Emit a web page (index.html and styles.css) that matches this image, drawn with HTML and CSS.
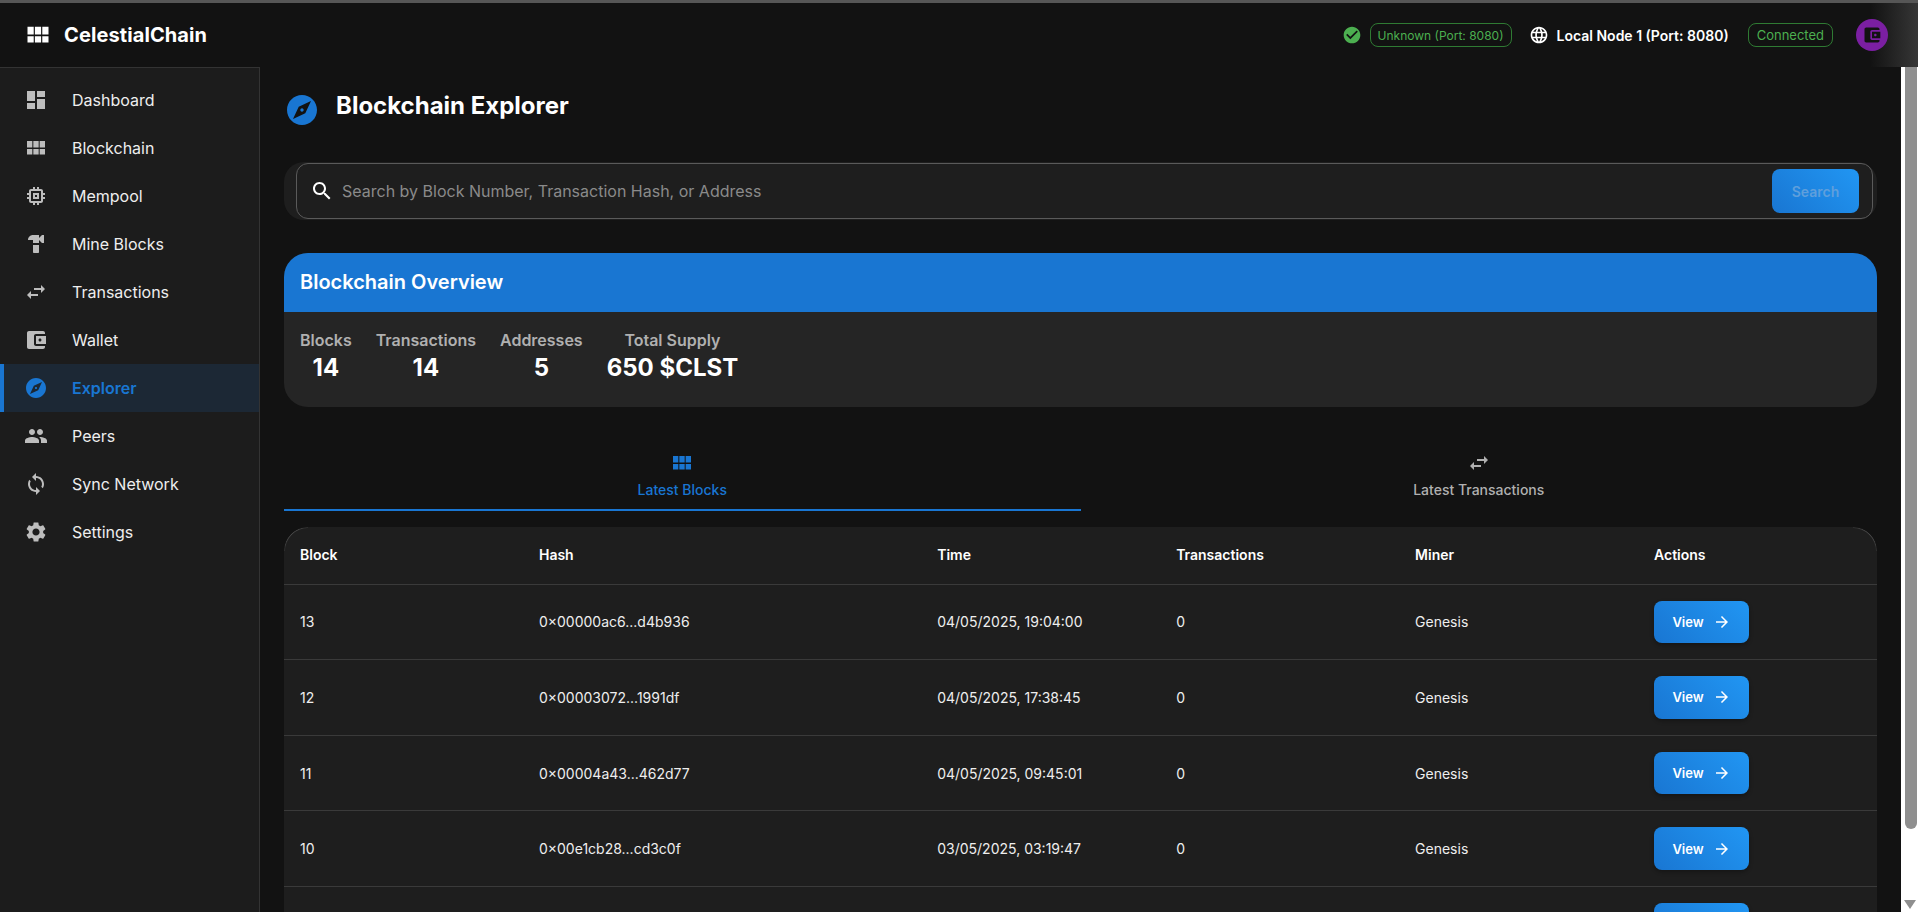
FILE: index.html
```html
<!DOCTYPE html>
<html lang="en">
    <head>
        <meta charset="utf-8">
        <title>CelestialChain Explorer</title>
        <link rel="stylesheet" href="styles.css">
    </head>
    <body>
        <svg class="defs" width="0" height="0">
            <symbol id="i-module" viewBox="0 0 24 24"><path d="M14.67 5v6.5H9.33V5h5.34zm1 6.5H21V5h-5.33v6.5zm-1 7V13H9.33v5.5h5.34zm1-5.5v5.5H21V13h-5.33zm-7.34 5.5V13H3v5.5h5.33zm0-7V5H3v6.5h5.33z"/></symbol>
            <symbol id="i-swap" viewBox="0 0 24 24"><path d="M6.99 11L3 15l3.99 4v-3H14v-2H6.99v-3zM21 9l-3.99-4v3H10v2h7.01v3L21 9z"/></symbol>
            <symbol id="i-wallet" viewBox="0 0 24 24"><path d="M21 18v1c0 1.1-.9 2-2 2H5c-1.11 0-2-.9-2-2V5c0-1.1.89-2 2-2h14c1.1 0 2 .9 2 2v1h-9c-1.11 0-2 .9-2 2v8c0 1.1.89 2 2 2h9zm-9-2h10V8H12v8zm4-2.5c-.83 0-1.5-.67-1.5-1.5s.67-1.5 1.5-1.5 1.5.67 1.5 1.5-.67 1.5-1.5 1.5z"/></symbol>
            <symbol id="i-explore" viewBox="0 0 24 24"><path d="M12 10.9c-.61 0-1.1.49-1.1 1.1s.49 1.1 1.1 1.1c.61 0 1.1-.49 1.1-1.1s-.49-1.1-1.1-1.1zM12 2C6.48 2 2 6.48 2 12s4.48 10 10 10 10-4.48 10-10S17.52 2 12 2zm2.19 12.19L6 18l3.81-8.19L18 6l-3.81 8.19z"/></symbol>
            <symbol id="i-arrow" viewBox="0 0 24 24"><path d="M12 4l-1.41 1.41L16.17 11H4v2h12.17l-5.58 5.59L12 20l8-8z"/></symbol>
        </svg>

        <div class="strip"></div>

        <header class="appbar">
            <div class="brand">
                <svg class="brand-icon"><use href="#i-module"/></svg>
                <span class="brand-name">CelestialChain</span>
            </div>
            <div class="status">
                <svg class="check" viewBox="0 0 24 24"><path d="M12 2C6.48 2 2 6.48 2 12s4.48 10 10 10 10-4.48 10-10S17.52 2 12 2zm-2 15l-5-5 1.41-1.41L10 14.17l7.59-7.59L19 8l-9 9z"/></svg>
                <span class="chip">Unknown (Port: 8080)</span>
                <svg class="globe" viewBox="0 0 24 24"><path d="M11.99 2C6.47 2 2 6.48 2 12s4.47 10 9.99 10C17.52 22 22 17.52 22 12S17.52 2 11.99 2zm6.93 6h-2.95c-.32-1.25-.78-2.45-1.38-3.56 1.84.63 3.37 1.91 4.33 3.56zM12 4.04c.83 1.2 1.48 2.53 1.91 3.96h-3.82c.43-1.43 1.08-2.76 1.91-3.96zM4.26 14C4.1 13.36 4 12.69 4 12s.1-1.36.26-2h3.38c-.08.66-.14 1.32-.14 2 0 .68.06 1.34.14 2H4.26zm.82 2h2.95c.32 1.25.78 2.45 1.38 3.56-1.84-.63-3.37-1.9-4.33-3.56zm2.95-8H5.08c.96-1.66 2.49-2.93 4.33-3.56C8.81 5.55 8.35 6.75 8.03 8zM12 19.96c-.83-1.2-1.48-2.53-1.91-3.96h3.82c-.43 1.43-1.08 2.76-1.91 3.96zM14.34 14H9.66c-.09-.66-.16-1.32-.16-2 0-.68.07-1.35.16-2h4.68c.09.65.16 1.32.16 2 0 .68-.07 1.34-.16 2zm.25 5.56c.6-1.11 1.06-2.31 1.38-3.56h2.95c-.96 1.65-2.49 2.93-4.33 3.56zM16.36 14c.08-.66.14-1.32.14-2 0-.68-.06-1.34-.14-2h3.38c.16.64.26 1.31.26 2s-.1 1.36-.26 2h-3.38z"/></svg>
                <span class="node-name">Local Node 1 (Port: 8080)</span>
                <span class="chip chip-last">Connected</span>
                <span class="avatar"><svg><use href="#i-wallet"/></svg></span>
            </div>
        </header>

        <div class="layout">
            <nav class="sidebar">
                <a class="nav-item"><svg viewBox="0 0 24 24"><path d="M3 13h8V3H3v10zm0 8h8v-6H3v6zm10 0h8V11h-8v10zm0-18v6h8V3h-8z"/></svg>Dashboard</a>
                <a class="nav-item"><svg><use href="#i-module"/></svg>Blockchain</a>
                <a class="nav-item"><svg viewBox="0 0 24 24"><path d="M15 9H9v6h6V9zm-2 4h-2v-2h2v2zm8-2V9h-2V7c0-1.1-.9-2-2-2h-2V3h-2v2h-2V3H9v2H7c-1.1 0-2 .9-2 2v2H3v2h2v2H3v2h2v2c0 1.1.9 2 2 2h2v2h2v-2h2v2h2v-2h2c1.1 0 2-.9 2-2v-2h2v-2h-2v-2h2zm-4 6H7V7h10v10z"/></svg>Mempool</a>
                <a class="nav-item"><svg viewBox="0 0 24 24"><path d="M18 3l-3 3V3H9C6.24 3 4 5.24 4 8h5v3h6V8l3 3h2V3h-2z"/><path d="M9 13v7c0 .55.45 1 1 1h4c.55 0 1-.45 1-1v-7H9z"/></svg>Mine Blocks</a>
                <a class="nav-item"><svg><use href="#i-swap"/></svg>Transactions</a>
                <a class="nav-item"><svg><use href="#i-wallet"/></svg>Wallet</a>
                <a class="nav-item active"><svg><use href="#i-explore"/></svg>Explorer</a>
                <a class="nav-item"><svg viewBox="0 0 24 24"><path d="M16 11c1.66 0 2.99-1.34 2.99-3S17.66 5 16 5c-1.66 0-3 1.34-3 3s1.34 3 3 3zm-8 0c1.66 0 2.99-1.34 2.99-3S9.66 5 8 5C6.34 5 5 6.34 5 8s1.34 3 3 3zm0 2c-2.33 0-7 1.17-7 3.5V19h14v-2.5c0-2.33-4.67-3.5-7-3.5zm8 0c-.29 0-.62.02-.97.05 1.16.84 1.97 1.97 1.97 3.45V19h6v-2.5c0-2.33-4.67-3.5-7-3.5z"/></svg>Peers</a>
                <a class="nav-item"><svg viewBox="0 0 24 24"><path d="M12 4V1L8 5l4 4V6c3.31 0 6 2.69 6 6 0 1.01-.25 1.97-.7 2.8l1.46 1.46C19.54 15.03 20 13.57 20 12c0-4.42-3.58-8-8-8zm0 14c-3.31 0-6-2.69-6-6 0-1.01.25-1.97.7-2.8L5.24 7.74C4.46 8.97 4 10.43 4 12c0 4.42 3.58 8 8 8v3l4-4-4-4v3z"/></svg>Sync Network</a>
                <a class="nav-item"><svg viewBox="0 0 24 24"><path d="M19.14 12.94c.04-.3.06-.61.06-.94 0-.32-.02-.64-.07-.94l2.03-1.58c.18-.14.23-.41.12-.61l-1.92-3.32c-.12-.22-.37-.29-.59-.22l-2.39.96c-.5-.38-1.03-.7-1.62-.94l-.36-2.54c-.04-.24-.24-.41-.48-.41h-3.84c-.24 0-.43.17-.47.41l-.36 2.54c-.59.24-1.13.57-1.62.94l-2.39-.96c-.22-.08-.47 0-.59.22L2.74 8.87c-.12.21-.08.47.12.61l2.03 1.58c-.05.3-.09.63-.09.94s.02.64.07.94l-2.03 1.58c-.18.14-.23.41-.12.61l1.92 3.32c.12.22.37.29.59.22l2.39-.96c.5.38 1.03.7 1.62.94l.36 2.54c.05.24.24.41.48.41h3.84c.24 0 .44-.17.47-.41l.36-2.54c.59-.24 1.13-.56 1.62-.94l2.39.96c.22.08.47 0 .59-.22l1.92-3.32c.12-.22.07-.47-.12-.61l-2.01-1.58zM12 15.6c-1.98 0-3.6-1.62-3.6-3.6s1.62-3.6 3.6-3.6 3.6 1.62 3.6 3.6-1.62 3.6-3.6 3.6z"/></svg>Settings</a>
            </nav>

            <main class="content">
                <div class="page-title">
                    <svg><use href="#i-explore"/></svg>
                    <h1>Blockchain Explorer</h1>
                </div>

                <div class="search-card">
                    <div class="search-field">
                        <svg viewBox="0 0 24 24"><path d="M15.5 14h-.79l-.28-.27C15.41 12.59 16 11.11 16 9.5 16 5.91 13.09 3 9.5 3S3 5.91 3 9.5 5.91 16 9.5 16c1.61 0 3.09-.59 4.23-1.57l.27.28v.79l5 4.99L20.49 19l-4.99-5zm-6 0C7.01 14 5 11.99 5 9.5S7.01 5 9.5 5 14 7.01 14 9.5 11.99 14 9.5 14z"/></svg>
                        <input class="search-input" placeholder="Search by Block Number, Transaction Hash, or Address">
                        <button class="search-btn">Search</button>
                    </div>
                </div>

                <section class="overview">
                    <h2>Blockchain Overview</h2>
                    <div class="stats">
                        <div class="stat"><span>Blocks</span><strong>14</strong></div>
                        <div class="stat"><span>Transactions</span><strong>14</strong></div>
                        <div class="stat"><span>Addresses</span><strong>5</strong></div>
                        <div class="stat"><span>Total Supply</span><strong>650 $CLST</strong></div>
                    </div>
                </section>

                <div class="tabs">
                    <div class="tab active"><svg><use href="#i-module"/></svg>Latest Blocks</div>
                    <div class="tab"><svg><use href="#i-swap"/></svg>Latest Transactions</div>
                </div>

                <div class="table-card">
                    <table>
                        <thead>
                            <tr>
                                <th class="col-s">Block</th>
                                <th class="col-l">Hash</th>
                                <th class="col-s">Time</th>
                                <th class="col-s">Transactions</th>
                                <th class="col-s">Miner</th>
                                <th class="col-s">Actions</th>
                            </tr>
                        </thead>
                        <tbody>
                            <tr>
                                <td>13</td><td>0×00000ac6...d4b936</td><td>04/05/2025, 19:04:00</td><td>0</td><td>Genesis</td>
                                <td><button class="view-btn">View<svg><use href="#i-arrow"/></svg></button></td>
                            </tr>
                            <tr>
                                <td>12</td><td>0×00003072...1991df</td><td>04/05/2025, 17:38:45</td><td>0</td><td>Genesis</td>
                                <td><button class="view-btn">View<svg><use href="#i-arrow"/></svg></button></td>
                            </tr>
                            <tr>
                                <td>11</td><td>0×00004a43...462d77</td><td>04/05/2025, 09:45:01</td><td>0</td><td>Genesis</td>
                                <td><button class="view-btn">View<svg><use href="#i-arrow"/></svg></button></td>
                            </tr>
                            <tr>
                                <td>10</td><td>0×00e1cb28...cd3c0f</td><td>03/05/2025, 03:19:47</td><td>0</td><td>Genesis</td>
                                <td><button class="view-btn">View<svg><use href="#i-arrow"/></svg></button></td>
                            </tr>
                            <tr>
                                <td></td><td></td><td></td><td></td><td></td>
                                <td><button class="view-btn"></button></td>
                            </tr>
                        </tbody>
                    </table>
                </div>
            </main>

            <div class="scrollbar">
                <div class="scroll-thumb"></div>
                <div class="scroll-arrow"></div>
            </div>
        </div>
    </body>
</html>
```

FILE: styles.css
```css
html, body {
    height: 100%;
    margin: 0;
}
body {
    display: flex;
    flex-direction: column;
    overflow: hidden;
    background-color: #121212;
    color: #fff;
    font-family: Inter, "Liberation Sans", sans-serif;
}
svg {
    fill: currentColor;
    flex: none;
    width: 24px;
    height: 24px;
}
.defs {
    position: absolute;
    width: 0;
    height: 0;
}
.strip {
    flex: none;
    height: 3px;
    background-color: #565656;
}

/* top bar */
.appbar {
    flex: none;
    height: 64px;
    display: flex;
    align-items: center;
    justify-content: space-between;
    padding: 0 30px 0 24px;
    background: linear-gradient(90deg, #121212 97.5%, #363636 100%);
}
.brand {
    display: flex;
    align-items: center;
    gap: 12px;
}
.brand-icon {
    width: 28px;
    height: 28px;
}
.brand-name {
    font-size: 20px;
    font-weight: 700;
    letter-spacing: .1px;
}
.status {
    display: flex;
    align-items: center;
}
.check {
    width: 20px;
    height: 20px;
    color: #4caf50;
    margin-right: 8px;
}
.globe {
    width: 20px;
    height: 20px;
    margin: 0 8px 0 17px;
}
.chip {
    height: 24px;
    box-sizing: border-box;
    padding: 0 7px;
    display: flex;
    align-items: center;
    border: 1px solid #2f7a33;
    border-radius: 8px;
    color: #4caf50;
    font-size: 12px;
}
.chip-last {
    margin-left: 19px;
    padding: 0 8px;
    font-size: 13px;
}
.node-name {
    font-size: 14px;
    font-weight: 600;
}
.avatar {
    width: 32px;
    height: 32px;
    margin-left: 23px;
    border-radius: 50%;
    background-color: #7b1fa2;
    color: #121212;
    display: flex;
    align-items: center;
    justify-content: center;
}
.avatar svg {
    width: 20px;
    height: 20px;
}

/* page below the bar */
.layout {
    flex: 1;
    min-height: 0;
    display: flex;
}
.sidebar {
    flex: none;
    width: 259px;
    padding-top: 8px;
    background-color: #1c1c1c;
    border-top: 1px solid #333;
    border-right: 1px solid #333;
}
.nav-item {
    height: 48px;
    display: flex;
    align-items: center;
    gap: 24px;
    padding-left: 24px;
    font-size: 16px;
    color: #eee;
}
.nav-item svg {
    color: #bdbdbd;
}
.nav-item.active {
    padding-left: 20px;
    border-left: 4px solid #1976d2;
    background-color: #1c2835;
    color: #1976d2;
    font-weight: 600;
}
.nav-item.active svg {
    color: #1976d2;
}

.content {
    flex: 1;
    min-width: 0;
    padding: 25px 24px 0;
    overflow: hidden;
}
.page-title {
    display: flex;
    align-items: center;
    gap: 16px;
    height: 36px;
}
.page-title svg {
    width: 36px;
    height: 36px;
    color: #1976d2;
}
.page-title h1 {
    margin: -10px 0 0;
    font-size: 24px;
    font-weight: 700;
}

/* search */
.search-card {
    margin-top: 34px;
    padding: 1px 4px 1px 12px;
    background-color: #1e1e1e;
    border-radius: 20px;
}
.search-field {
    height: 56px;
    box-sizing: border-box;
    display: flex;
    align-items: center;
    padding: 0 13px 0 13px;
    border: 1px solid #5a5a5a;
    border-radius: 12px;
}
.search-field svg {
    color: #fff;
}
.search-input {
    flex: 1;
    min-width: 0;
    margin-left: 8px;
    padding: 0;
    border: 0;
    outline: 0;
    background: none;
    color: #fff;
    font: 16px Inter, "Liberation Sans", sans-serif;
}
.search-input::placeholder {
    color: #8a8a8a;
    opacity: 1;
}
.search-btn {
    width: 87px;
    height: 44px;
    border: 0;
    border-radius: 8px;
    background: linear-gradient(45deg, #1976d2, #2196f3);
    color: #5f9fdc;
    font: 600 14px Inter, "Liberation Sans", sans-serif;
}

/* overview card */
.overview {
    margin-top: 33px;
    border-radius: 24px;
    background-color: #252525;
    overflow: hidden;
}
.overview h2 {
    margin: 0;
    height: 59px;
    box-sizing: border-box;
    padding: 0 0 2px 16px;
    display: flex;
    align-items: center;
    background-color: #1976d2;
    font-size: 20px;
    font-weight: 600;
}
.stats {
    display: flex;
    gap: 24px;
    padding: 16px 16px 24px;
}
.stat {
    display: flex;
    flex-direction: column;
    align-items: center;
}
.stat span {
    line-height: 24px;
    font-size: 16px;
    font-weight: 600;
    color: #b0b0b0;
}
.stat strong {
    margin-top: 1px;
    line-height: 30px;
    font-size: 24px;
    font-weight: 700;
}

/* tabs */
.tabs {
    margin-top: 32px;
    display: flex;
}
.tab {
    flex: 1;
    height: 72px;
    box-sizing: border-box;
    display: flex;
    flex-direction: column;
    align-items: center;
    gap: 6px;
    padding-top: 12px;
    font-size: 14px;
    font-weight: 500;
    color: #b0b0b0;
}
.tab.active {
    color: #1976d2;
    border-bottom: 2px solid #1976d2;
}

/* table */
.table-card {
    position: relative;
    margin-top: 16px;
    background-color: #1e1e1e;
    border-radius: 24px 24px 0 0;
    overflow: hidden;
}
.table-card::before,
.table-card::after {
    content: "";
    position: absolute;
    top: 0;
    width: 24px;
    height: 24px;
    box-sizing: border-box;
    border-top: 1px solid #4a4a4a;
}
.table-card::before {
    left: 0;
    border-left: 1px solid #4a4a4a;
    border-top-left-radius: 24px;
    -webkit-mask-image: linear-gradient(135deg, #000 30%, transparent 65%);
}
.table-card::after {
    right: 0;
    border-right: 1px solid #4a4a4a;
    border-top-right-radius: 24px;
    -webkit-mask-image: linear-gradient(225deg, #000 30%, transparent 65%);
}
table {
    width: 100%;
    table-layout: fixed;
    border-collapse: collapse;
    font-size: 14px;
}
.col-s {
    width: 15%;
}
.col-l {
    width: 25%;
}
th, td {
    box-sizing: border-box;
    padding: 16px;
    text-align: left;
    border-bottom: 1px solid #3a3a3a;
}
th {
    height: 57px;
    padding-top: 15px;
    padding-bottom: 17px;
    font-weight: 600;
    color: #fff;
}
td {
    color: #eee;
}
.view-btn {
    width: 95px;
    height: 42.67px;
    display: flex;
    align-items: center;
    justify-content: center;
    gap: 9px;
    padding: 0;
    border: 0;
    border-radius: 8px;
    background: linear-gradient(45deg, #1976d2, #2196f3);
    box-shadow: 0 2px 4px rgba(0, 0, 0, .3);
    color: #fff;
    font: 600 13px Inter, "Liberation Sans", sans-serif;
}
.view-btn svg {
    width: 18px;
    height: 18px;
}

/* the window scrollbar */
.scrollbar {
    flex: none;
    width: 17px;
    display: flex;
    flex-direction: column;
    align-items: center;
    background-color: #fff;
}
.scroll-thumb {
    width: 12px;
    height: 762px;
    margin-left: 2px;
    border-radius: 0 0 6px 6px;
    background-color: #8f8f8f;
}
.scroll-arrow {
    margin-top: 71px;
    width: 0;
    height: 0;
    border-left: 6px solid transparent;
    border-right: 6px solid transparent;
    border-top: 9px solid #8f8f8f;
}
```
